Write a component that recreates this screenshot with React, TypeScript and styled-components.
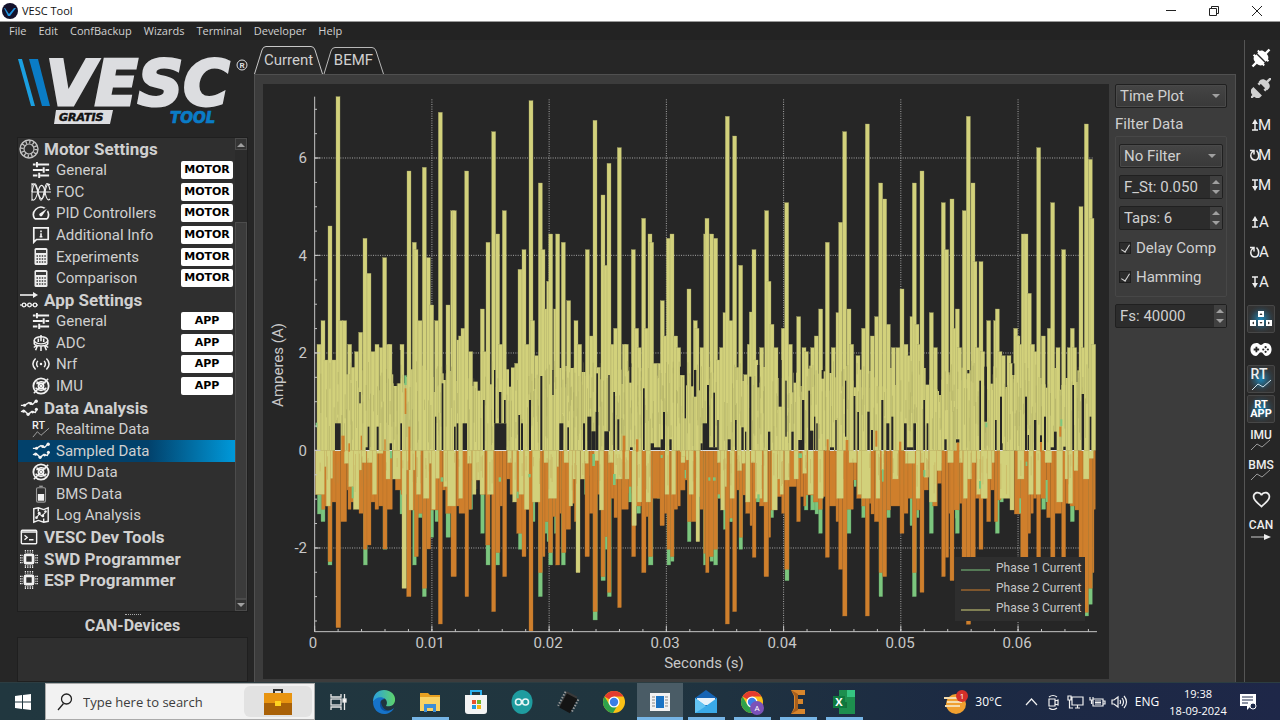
import React from "react";
import styled, { createGlobalStyle, css } from "styled-components";
import { MdSpeed, MdFavoriteBorder } from "react-icons/md";

const GlobalStyle = createGlobalStyle`
  * { box-sizing: border-box; }
  body { margin: 0; background: #262626; color: #d0d0d0; font-family: Roboto, "Liberation Sans", sans-serif; font-size: 16px; }
  button, input, select { font: inherit; color: inherit; margin: 0; }
  button { padding: 0; border: 0; background: none; }
`;

const ui = `"Open Sans", "Noto Sans", sans-serif`;

const Page = styled.div`
  min-height: 100vh;
  display: flex;
  flex-direction: column;
`;

/* ---------- window frame ---------- */

const TitleBar = styled.header`
  height: 22px;
  background: #fff;
  color: #111;
  display: flex;
  align-items: center;
  padding: 0 2px 0 2px;
  border-bottom: 1px solid #9a9a9a;
  font-family: ${ui};
  font-size: 11px;
`;
const TitleText = styled.span`
  flex: 1;
  padding-left: 4px;
`;
const WindowButton = styled.button`
  width: 43px;
  height: 20px;
  display: grid;
  place-items: center;
`;
const MenuBar = styled.nav`
  height: 18px;
  display: flex;
  align-items: center;
  gap: 12px;
  padding-left: 9px;
  background: #232323;
  font-family: ${ui};
  font-size: 11px;
`;
const MenuItem = styled.button`
  line-height: 16px;
`;
const Body = styled.div`
  flex: 1;
  display: flex;
  min-height: 0;
`;

/* ---------- side bar ---------- */

const SideBar = styled.aside`
  width: 254px;
  flex: none;
  padding-left: 17px;
  padding-right: 6px;
  display: flex;
  flex-direction: column;
`;
const LogoBox = styled.div`
  height: 97px;
  padding-top: 4px;
`;
const TreeFrame = styled.div`
  height: 475px;
  display: flex;
  background: #2f2f2f;
  border: 1px solid #1f1f1f;
`;
const Tree = styled.ul`
  flex: 1;
  height: 453px;
  margin: 0;
  padding: 0;
  list-style: none;
  display: grid;
  grid-auto-rows: 1fr;
`;
const TreeRow = styled.li<{ $head?: boolean; $on?: boolean }>`
  display: flex;
  align-items: center;
  padding: 0 2px 0 ${(p) => (p.$head ? 1 : 13)}px;
  gap: 5px;
  font-size: ${(p) => (p.$head ? 17 : 15)}px;
  font-weight: ${(p) => (p.$head ? 700 : 400)};
  line-height: 20px;
  white-space: nowrap;
  ${(p) =>
    p.$on &&
    css`
      background: linear-gradient(90deg, #02416b 0%, #02416b 60%, #0099da 100%);
    `}
`;
const TreeIcon = styled.span`
  width: 20px;
  height: 20px;
  display: grid;
  place-items: center;
  color: #f2f2f2;
`;
const TreeLabel = styled.span`
  flex: 1;
`;
const Badge = styled.span`
  width: 52px;
  height: 18px;
  border-radius: 2px;
  background: #fff;
  color: #000;
  font: 700 11px/18px "DejaVu Sans", sans-serif;
  text-align: center;
`;
const ScrollTrack = styled.div`
  width: 12px;
  display: flex;
  flex-direction: column;
  background: #2b2b2b;
`;
const ScrollStep = styled.button`
  height: 12px;
  display: grid;
  place-items: center;
  background: #343434;
  border: 1px solid #4a4a4a;
`;
const ScrollGap = styled.div`
  height: 72px;
`;
const ScrollThumb = styled.div`
  flex: 1;
  background: #3b3b3b;
  border: 1px solid #4c4c4c;
`;
const Splitter = styled.div`
  width: 16px;
  height: 1px;
  margin: 2px auto 0;
  border-top: 1px dotted #aaa;
`;
const DevicesTitle = styled.h2`
  margin: 0;
  font-size: 16px;
  line-height: 22px;
  text-align: center;
`;
const DevicesBox = styled.div`
  flex: 1;
  background: #2f2f2f;
  border: 1px solid #1f1f1f;
`;

/* ---------- main area ---------- */

const Main = styled.main`
  flex: 1;
  min-width: 0;
  display: flex;
  flex-direction: column;
`;
const Tabs = styled.div`
  height: 34px;
  display: flex;
  align-items: flex-end;
`;
const Tab = styled.button<{ $width: number }>`
  position: relative;
  width: ${(p) => p.$width}px;
  height: 28px;
  line-height: 29px;
  text-align: center;
  font-size: 15px;
`;
const TabShape = styled.svg`
  position: absolute;
  left: 0;
  top: 0;
  z-index: -1;
`;
const TabPanel = styled.section`
  flex: 1;
  display: flex;
  gap: 6px;
  padding: 9px 8px 3px 8px;
  background: #3c3c3c;
  border: 1px solid #505050;
  border-bottom: 0;
`;
const ChartBox = styled.div`
  flex: 1;
  min-width: 0;
  background: #262626;
  display: flex;
`;
const Controls = styled.form`
  width: 112px;
  flex: none;
  display: flex;
  flex-direction: column;
`;
const GroupLabel = styled.div`
  font-size: 15px;
  line-height: 24px;
  padding-top: 4px;
`;
const Group = styled.fieldset`
  margin: 0 0 7px;
  padding: 7px 3px 8px;
  min-width: 0;
  border: 1px solid #474747;
  border-radius: 2px;
  display: flex;
  flex-direction: column;
  gap: 7px;
`;
const SelectWrap = styled.div`
  display: grid;
  align-items: center;
  justify-items: end;
  & > * { grid-area: 1 / 1; }
  & > svg { margin-right: 7px; pointer-events: none; }
`;
const Select = styled.select`
  appearance: none;
  width: 100%;
  height: 24px;
  padding: 0 4px;
  font-size: 15px;
  background: linear-gradient(#454545, #393939);
  border: 1px solid #202020;
  border-radius: 2px;
  box-shadow: inset 0 0 0 1px #4a4a4a;
`;
const SpinWrap = styled.div`
  height: 24px;
  display: flex;
  border: 1px solid #202020;
  border-radius: 2px;
  background: #2c2c2c;
`;
const SpinInput = styled.input`
  flex: 1;
  min-width: 0;
  border: 0;
  padding: 0 4px;
  background: none;
  font-size: 15px;
`;
const SpinSteps = styled.div`
  width: 12px;
  background: #404040;
  display: grid;
  grid-template-rows: 1fr 1fr;
`;
const StepButton = styled.button`
  display: grid;
  place-items: center;
`;
const CheckLabel = styled.label`
  display: flex;
  align-items: center;
  gap: 5px;
  height: 22px;
  font-size: 15px;
  white-space: nowrap;
`;
const CheckBox = styled.input`
  appearance: none;
  flex: none;
  width: 12px;
  height: 12px;
  background: #2c2c2c;
  border: 1px solid #1e1e1e;
  display: flex;
  justify-content: center;
  &:checked::before {
    content: "";
    width: 4px;
    height: 8px;
    border: solid #d8d8d8;
    border-width: 0 1px 1px 0;
    transform: rotate(32deg);
  }
`;

/* ---------- right tool strip ---------- */

const Strip = styled.nav`
  width: 36px;
  flex: none;
  margin-left: 8px;
  padding: 3px 3px 0 0;
  border-left: 1px solid #555;
  display: flex;
  flex-direction: column;
  align-items: center;
`;
const StripButton = styled.button<{ $on?: boolean }>`
  width: 28px;
  height: 28px;
  margin: 1px 0;
  display: grid;
  place-items: center;
  color: #eee;
  border-radius: 2px;
  ${(p) =>
    p.$on &&
    css`
      background: radial-gradient(circle, #1c86b8 0%, #2b5468 35%, #303a40 58%, #333 75%);
      border: 1px solid #474747;
    `}
`;
const StripRule = styled.div`
  height: 7px;
`;

/* ---------- task bar ---------- */

const TaskBar = styled.footer`
  height: 38px;
  border-top: 1px solid #2c3d42;
  display: flex;
  background: linear-gradient(90deg, #21373f 0%, #20353f 50%, #1c2a43 75%, #1e2748 100%);
  color: #fff;
  font-family: ${ui};
`;
const TaskButton = styled.button<{ $open?: boolean; $active?: boolean }>`
  width: 46px;
  height: 37px;
  display: grid;
  place-items: center;
  background: ${(p) => (p.$active ? "#4a5c66" : "none")};
  ${(p) =>
    p.$open &&
    css`
      background-image: linear-gradient(#76b5e6, #76b5e6);
      background-size: ${p.$active ? 46 : 37}px 3px;
      background-position: center bottom;
      background-repeat: no-repeat;
    `}
`;
const SearchBox = styled.label`
  width: 270px;
  margin-left: -1px;
  display: flex;
  align-items: center;
  gap: 10px;
  padding: 0 2px 0 11px;
  background: #f2f2f2;
  color: #222;
  border: 1px solid #aaa;
`;
const SearchInput = styled.input`
  flex: 1;
  min-width: 0;
  padding: 0;
  border: 0;
  background: none;
  font-size: 13px;
  &::placeholder { color: #3c3c3c; }
`;
const SearchArt = styled.span`
  width: 68px;
  height: 31px;
  border-radius: 6px;
  background: #e2e2e2;
  display: grid;
  place-items: center;
`;
const Tray = styled.div`
  margin-left: auto;
  display: flex;
  align-items: center;
  font-size: 12px;
  padding-right: 16px;
`;
const TrayButton = styled.button<{ $width: number }>`
  width: ${(p) => p.$width}px;
  height: 37px;
  display: flex;
  align-items: center;
  justify-content: center;
  gap: 7px;
`;
const Clock = styled.time`
  width: 68px;
  font-size: 11px;
  line-height: 17px;
  text-align: center;
  white-space: nowrap;
`;

/* ---------- icons ---------- */

const Icon = ({ size = 18, box = 20, children }: { size?: number; box?: number; children: React.ReactNode }) => (
  <svg width={size} height={size} viewBox={`0 0 ${box} ${box}`} fill="none" stroke="currentColor" strokeWidth={1.6} aria-hidden="true">
    {children}
  </svg>
);

const Arrow = ({ up, color = "#a0a0a0" }: { up?: boolean; color?: string }) => (
  <svg width="8" height="5" viewBox="0 0 8 5" aria-hidden="true">
    <path d={up ? "M0 5L4 1L8 5Z" : "M0 0L4 4L8 0Z"} fill={color} />
  </svg>
);

const MotorIcon = () => (
  <Icon size={20}>
    <g stroke="#c4c4c4">
      <circle cx="10" cy="10" r="9" strokeWidth="1.4" />
      <circle cx="10" cy="10" r="5" strokeWidth="1.2" />
      <circle cx="10" cy="10" r="7" strokeWidth="3" strokeDasharray="1.3 2.365" />
    </g>
  </Icon>
);
const TuneIcon = () => (
  <Icon>
    <path d="M1 4H4M6 4H19M1 10H12M15 10H19M1 16H6M9 16H19" strokeWidth="2.200" />
    <path d="M5.500 1V7M13 7V13M8 13V19" strokeWidth="2.200" />
  </Icon>
);
const WavesIcon = () => (
  <Icon size={20}>
    <path d="M1 1V19M1 10H20" strokeWidth="1" />
    <g strokeWidth="1.1">
      <path d="M1 10C3 -1 5 -1 7 10S11 21 13 10S17 -1 19 8" />
      <path d="M1 3C4 -1 6 7 7.500 12S12 20 14 10S18 2 19 3" />
      <path d="M1 17C4 21 6 13 7.500 8S12 0 14 10S18 18 19 17" />
    </g>
  </Icon>
);
const InfoIcon = () => (
  <Icon>
    <path d="M2 18V2H18V15H5Z" strokeWidth="1.900" />
    <path d="M10 5V7M10 8V12M8.500 12H11.500" strokeWidth="1.800" />
  </Icon>
);
const CalcIcon = () => (
  <svg width="14" height="17" viewBox="0 0 14 17" aria-hidden="true">
    <rect x=".5" y="0" width="13" height="17" rx="1.500" fill="#eee" />
    <path d="M2 2H12V5H2Z" fill="#3a3a3a" />
    <path d="M2.500 8H12M2.500 11H12M2.500 14H12" stroke="#3a3a3a" strokeWidth="1.500" strokeDasharray="1.500 1.100" />
  </svg>
);
const AppIcon = () => (
  <Icon size={20}>
    <path d="M1 5H15" />
    <path d="M14 2L19 5L14 8Z" fill="currentColor" stroke="none" />
    <path d="M1 15H19" strokeWidth="1.200" />
    <g fill="#2f2f2f" strokeWidth="1.300">
      <circle cx="5" cy="15" r="1.800" />
      <circle cx="10.500" cy="15" r="1.800" />
      <circle cx="16" cy="15" r="1.800" />
    </g>
  </Icon>
);
const AdcIcon = () => (
  <Icon>
    <ellipse cx="10" cy="7" rx="7.500" ry="4" />
    <path d="M2.500 7V11C4 14 16 14 17.500 11V7M10 1V8M6 13L4 18M10 13V19M14 13L16 18M2 15L6 12M18 15L14 12M7 5V9M13 5V9" strokeWidth="1.700" />
  </Icon>
);
const RadioIcon = () => (
  <Icon>
    <path d="M4 4C0 8 0 12 4 16M16 4C20 8 20 12 16 16M6.500 6.500C4.500 9 4.500 11 6.500 13.500M13.500 6.500C15.500 9 15.500 11 13.500 13.500" />
    <circle cx="10" cy="10" r="1.400" fill="currentColor" stroke="none" />
  </Icon>
);
const ImuIcon = () => (
  <Icon>
    <circle cx="10" cy="10" r="8.500" strokeWidth="2" />
    <circle cx="10" cy="10" r="3" />
    <path d="M2 18L18 2M5 5L15 15M4 12C7 16 13 16 16 12M5 8C7 5 12 4 15 7" />
  </Icon>
);
const DataIcon = () => (
  <Icon>
    <path d="M1 7H5L10 4L14 6L18 2M1 14L5 13L9 17L13 14L17 15L19 11" strokeWidth="1.500" />
    <g fill="currentColor" stroke="none">
      <circle cx="5" cy="7" r="1.700" /><circle cx="12" cy="5" r="1.700" /><circle cx="18" cy="2.500" r="1.900" />
      <circle cx="4" cy="13.500" r="1.700" /><circle cx="9" cy="17" r="1.800" /><circle cx="14" cy="14.500" r="1.500" /><circle cx="18.200" cy="11.500" r="1.700" />
    </g>
  </Icon>
);
const RtIcon = () => (
  <Icon>
    <text x="0" y="10" fontSize="12" fontWeight="500" fontFamily="Roboto, sans-serif" fill="currentColor" stroke="none">RT</text>
    <path d="M1 19L6 13L10 17L19 9" strokeWidth="1" stroke="#aaa" />
  </Icon>
);
const BatteryIcon = () => (
  <Icon>
    <rect x="5" y="3" width="10" height="16" rx="1.500" stroke="#999" strokeWidth="1.200" />
    <path d="M8 1.500H12" stroke="#999" />
    <rect x="6.500" y="10" width="7" height="7.500" fill="currentColor" stroke="none" />
  </Icon>
);
const MapIcon = () => (
  <Icon>
    <path d="M2 3L7 2L13 4L18 2V17L13 18L7 16L2 18ZM7 2V6M13 14V18" />
    <path d="M5 13L8 9L11 11L15 7" strokeWidth="1.200" />
    <g fill="currentColor" stroke="none"><circle cx="8" cy="8" r="1.600" /><circle cx="12" cy="11" r="1.600" /><circle cx="15" cy="6" r="1.400" /><circle cx="5" cy="13" r="1.500" /></g>
  </Icon>
);
const TerminalIcon = () => (
  <Icon>
    <rect x="1.500" y="2.500" width="17" height="15" rx="1" />
    <path d="M1 4.500H19M5 8L8 10.500L5 13M10 13H15" />
  </Icon>
);
const ChipIcon = () => (
  <Icon>
    <rect x="5.500" y="5.500" width="9" height="9" rx="1" strokeWidth="3" />
    <path d="M6 0V3M8.700 0V3M11.400 0V3M14 0V3M6 17V20M8.700 17V20M11.400 17V20M14 17V20M0 6H3M0 8.700H3M0 11.400H3M0 14H3M17 6H20M17 8.700H20M17 11.400H20M17 14H20" strokeWidth="1.300" strokeDasharray="1.200 .5" />
  </Icon>
);

const PlugIcon = ({ apart }: { apart?: boolean }) => (
  <Icon size={20}>
    <g transform="rotate(45 10 10)" fill={apart ? "#d0d0d0" : "#fff"} stroke="none">
      <g transform={apart ? "translate(0 -2)" : undefined}>
        <path d="M4 9.300V6.500C4.500 4.500 6 3.200 8.800 3V-2H11.200V3C14 3.200 15.500 4.500 16 6.500V9.300Z" />
        {apart && <path d="M4.500 8H7V11.500H4.500ZM13 8H15.500V11.500H13Z" />}
      </g>
      <g transform={apart ? "translate(0 4)" : undefined}>
        <path d="M4 10.700V13.500C4.500 15.500 6 16.800 8.800 17V22H11.200V17C14 16.800 15.500 15.500 16 13.500V10.700Z" />
      </g>
      {!apart && <path d="M2.500 6H5V8H2.500ZM15 6H17.500V8H15ZM2.500 12H5V14H2.500ZM15 12H17.500V14H15Z" />}
    </g>
  </Icon>
);

type ConfKind = "up" | "turn" | "down";
const ConfIcon = ({ kind, letter }: { kind: ConfKind; letter: string }) => (
  <svg width="22" height="20" viewBox="0 0 22 20" aria-hidden="true">
    <g fill="none" stroke="currentColor" strokeWidth="1.500">
      {kind === "up" && <path d="M5 15V7M2 15H8" />}
      {kind === "down" && <path d="M5 5V12M2 5H8" />}
      {kind === "turn" && <path d="M3 6C-1 10 1 15 5 15S10 9 6.500 5.500M0 5.500H4V9.500" />}
    </g>
    {kind === "up" && <path d="M2 9L5 4L8 9Z" fill="currentColor" />}
    {kind === "down" && <path d="M2 11L5 16L8 11Z" fill="currentColor" />}
    <text x={letter === "M" ? 8 : 9} y="15" fontSize="15" fill="currentColor" fontFamily="Roboto, sans-serif">{letter}</text>
  </svg>
);

const LabelIcon = ({ text, tail = "line", color = "#eee" }: { text: string; tail?: "line" | "arrow" | "bright"; color?: string }) => (
  <svg width="28" height="24" viewBox="0 0 28 24" aria-hidden="true">
    <text x={text === "RT" ? 11 : 14} y="12" fontSize={text === "RT" ? 14 : 12} fontWeight="500" textAnchor="middle" fill={color} fontFamily="Roboto, sans-serif">{text}</text>
    {tail === "arrow" ? (
      <g><path d="M4 20H19" stroke="#ccc" /><path d="M17 17L24 20L17 23Z" fill="#eee" /></g>
    ) : (
      <path d="M4 23L10 17L15 20L23 13" fill="none" stroke={tail === "bright" ? "#cfe6f2" : "#999"} />
    )}
  </svg>
);
const KeysIcon = () => (
  <svg width="22" height="18" viewBox="0 0 22 18" aria-hidden="true">
    <g fill="#fff"><rect x="8" y="1" width="6" height="6" /><rect x="0" y="10" width="6" height="6" /><rect x="8" y="10" width="6" height="6" /><rect x="16" y="10" width="6" height="6" /></g>
    <g fill="#333"><path d="M9.500 5L11 3L12.500 5ZM9.500 12L11 14L12.500 12ZM4 11.500V14.500L2 13ZM18 11.500V14.500L20 13Z" /></g>
  </svg>
);
const PadIcon = () => (
  <svg width="22" height="15" viewBox="0 0 24 16" aria-hidden="true">
    <path d="M7 1C10 1 10 3 12 3S14 1 17 1C21 1 23.500 4 23.500 8S21 15 17.500 15C15 15 14.500 11 12 11S9 15 6.500 15C3 15 .5 12 .5 8S3 1 7 1Z" fill="#fff" />
    <path d="M4 8H10M7 5V11" stroke="#262626" strokeWidth="2" />
    <g fill="#262626"><circle cx="17" cy="5.500" r="1.200" /><circle cx="17" cy="10.500" r="1.200" /><circle cx="14.500" cy="8" r="1.200" /><circle cx="19.500" cy="8" r="1.200" /></g>
  </svg>
);
const RtAppIcon = () => (
  <svg width="26" height="24" viewBox="0 0 26 24" aria-hidden="true" fontWeight="700" fill="#fff" textAnchor="middle" fontFamily="Roboto, sans-serif">
    <text x="13" y="11" fontSize="11">RT</text>
    <text x="13" y="20" fontSize="11">APP</text>
  </svg>
);

const Logo = () => (
  <svg width="232" height="88" viewBox="0 -8 232 88" role="img" aria-label="VESC Tool">
    <path d="M1 7H5L18 54H14Z" fill="#1b9fe0" />
    <path d="M12 7H21L33 54H25Z" fill="#0a7cc6" />
    <g fontFamily="DejaVu Sans, sans-serif" fontWeight="700" fontStyle="italic">
      <text x="29" y="53" fontSize="63" fill="#dcdde0" stroke="#dcdde0" strokeWidth="3">VESC</text>
      <path d="M39 58H96L93 72H37Z" fill="#dcdde0" />
      <text x="42" y="69" fontSize="11" fill="#111" stroke="#111" strokeWidth="0.500">GRATIS</text>
      <text x="153" y="71" fontSize="15" fill="#0a7cc6" stroke="#0a7cc6" strokeWidth="0.700">TOOL</text>
    </g>
    <circle cx="225" cy="13" r="5" fill="none" stroke="#dcdde0" />
    <text x="225" y="16" fontSize="8" fontWeight="700" textAnchor="middle" fill="#dcdde0" fontFamily="Roboto, sans-serif">R</text>
  </svg>
);

/* ---------- chart ---------- */

// Samples are kept in thirds of a pixel, in two halves with their own origin.
const HALVES = [-24, 1251];
const LOW = 858;
const ZERO = 1099;

type Pair = [number, number];
type Span = [number, number, number];
type Block = [number, number, number, number];

const pairs = (s: string) => s.trim().split(/\s+/).map((t) => t.split(",").map(Number) as Pair);
const spans = (s: string) => s.trim().split(/\s+/).map((t) => t.split(",").map(Number) as Span);
const blocks = (s: string) => s.trim().split(/\s+/).map((t) => t.split(",").map(Number) as Block);

const peaks = [
  pairs(`192,793 204,722 213,840 225,438 237,840 249,50 258,722 269,722 284,793 294,862 305,815 317,757 330,475 342,580 354,815 366,793 379,803 389,533 400,793 405,793 441,793 462,273 478,487 483,509 495,722 508,262 520,533 530,675 545,722 556,97 579,675 593,392 598,392 611,780 617,768 624,745 635,273 647,815 682,687 690,815 699,487 716,155 728,462 737,793 748,392 774,863 785,850 795,568 807,509 816,793 828,62 833,722 845,827 856,309 864,509 874,687 881,604 887,462 902,687 908,462 925,487 941,662 963,722 974,793 997,509 1009,768 1020,121 1030,862 1044,345 1053,556 1062,250 1074,793 1082,745 1093,203 1108,793 1114,793 1135,509 1145,745 1153,803 1166,415 1174,745 1185,462 1190,487 1200,850 1213,850 1222,662 1232,768 1240,475 1251,462 1262,768 1271,803 1283,886`),
  pairs(`8,886 27,627 46,722 51,745 66,803 77,462 81,415 95,462 107,475 116,840 125,803 135,698 142,109 153,722 164,168 172,862 182,556 197,884 208,793 214,696 222,509 228,840 245,803 260,392 267,604 276,733 288,803 310,745 320,368 331,793 356,710 372,803 379,815 398,803 409,768 422,687 442,487 460,803 474,698 482,427 494,155 507,687 515,793 534,827 551,745 562,132 577,768 590,710 602,309 614,357 625,733 640,803 654,803 666,627 678,793 687,827 696,710 703,309 711,733 719,793 726,273 754,698 766,803 790,368 800,509 816,357 825,745 832,687 839,803 853,392 865,109 879,309 885,545 893,803 903,545 908,815 926,722 947,722 952,687 960,815 970,827 987,827 994,850 1007,745 1014,768 1024,793 1030,462 1038,462 1048,640 1058,793 1068,815 1076,203 1090,768 1108,745 1118,368 1134,803 1151,509 1168,803 1177,745 1184,803 1203,380 1211,803 1219,132 1231,238 1236,415 1241,793`),
];

const yellowLow = [
  spans(`182,208,373 208,214,290 214,226,408 226,233,325 268,281,280 281,295,350 295,312,418 312,320,300 320,333,278 336,352,278 352,365,373 365,384,250 393,405,327 413,436,327 441,454,655 454,462,300 462,474,420 474,480,300 484,497,373 505,522,385 522,530,280 530,541,418 541,553,325 566,578,350 578,602,408 611,623,385 637,650,280 652,663,373 663,675,330 675,688,373 697,715,373 758,770,278 773,785,396 792,806,373 808,822,418 832,855,396 867,880,278 880,905,385 905,911,290 927,941,278 942,953,408 953,962,327 963,975,608 977,989,327 989,1000,280 1018,1031,272 1033,1046,420 1060,1075,278 1077,1102,327 1110,1122,327 1131,1144,467 1147,1160,396 1173,1187,396 1230,1242,373 1250,1262,373 1278,1290,278`),
  spans(`0,4,245 4,16,260 18,26,270 27,40,373 48,59,515 112,122,278 122,134,420 134,140,350 150,163,385 172,185,302 185,196,280 197,210,396 213,225,278 226,246,385 251,262,396 276,292,420 292,300,327 300,310,373 314,328,330 342,355,327 368,380,310 384,400,373 414,430,385 470,490,385 507,530,278 533,545,373 545,572,385 588,600,385 605,612,300 638,655,327 676,684,280 684,705,280 708,720,385 722,733,278 733,746,322 748,770,396 770,785,302 803,820,278 838,848,278 850,862,385 862,875,327 875,888,278 890,902,373 903,922,385 922,935,327 935,943,278 960,990,385 990,1002,420 1013,1032,327 1046,1060,373 1068,1082,373 1095,1115,278 1130,1148,396 1155,1163,327 1165,1178,400 1182,1194,302 1210,1227,327 1227,1240,265`),
];

const orangeLow = [
  spans(`182,200,373 200,210,418 210,219,408 219,231,575 231,243,396 243,257,773 257,275,455 275,279,360 279,288,418 288,312,396 312,325,430 325,336,538 336,348,525 348,360,396 360,371,418 371,384,408 384,396,537 396,412,418 414,421,327 421,438,360 438,455,373 455,468,680 468,478,420 478,490,560 490,502,430 502,515,655 515,527,537 527,550,420 550,562,762 562,572,360 572,588,430 588,604,620 604,612,408 612,630,430 630,641,680 641,650,418 650,680,330 680,692,373 692,705,525 705,710,373 710,722,725 722,735,548 735,743,408 743,755,620 755,765,327 765,785,373 785,801,490 801,813,560 813,822,418 822,834,783 834,850,396 850,862,608 862,870,560 870,880,455 880,893,548 893,902,440 902,914,585 914,920,430 920,933,548 933,947,478 947,958,400 958,966,455 977,990,327 990,1003,560 1003,1014,430 1014,1027,725 1027,1038,373 1038,1050,620 1050,1057,500 1057,1068,667 1068,1077,385 1077,1088,443 1088,1099,713 1099,1120,418 1120,1130,370 1130,1142,560 1142,1160,408 1160,1173,608 1173,1180,440 1180,1193,560 1193,1215,385 1215,1228,467 1228,1236,430 1236,1246,538 1246,1257,560 1257,1268,418 1268,1276,408 1276,1290,360`),
  spans(`0,15,360 15,22,330 22,34,455 34,48,455 48,60,380 60,71,418 71,77,550 77,87,608 87,100,560 100,113,538 113,125,385 125,136,418 136,148,762 148,158,445 158,170,725 170,178,360 178,188,502 188,197,375 197,210,430 210,217,467 217,228,562 228,238,380 238,252,408 252,266,620 266,272,502 272,280,420 280,305,380 305,314,430 314,327,598 327,350,350 350,361,455 361,371,380 371,378,408 378,400,375 400,415,396 415,427,418 427,436,380 436,448,562 448,468,408 468,476,455 476,488,598 488,501,738 501,520,418 520,530,330 530,545,385 545,556,408 556,568,738 568,573,400 573,583,432 583,597,455 597,608,608 608,620,620 620,632,420 632,660,408 660,672,490 672,684,430 684,697,385 697,709,608 709,720,420 720,732,667 732,745,360 745,758,320 758,772,408 772,785,340 785,796,620 796,806,562 806,810,430 810,822,632 822,838,420 838,846,400 846,859,562 859,872,763 872,886,562 886,897,385 897,909,538 909,920,385 920,932,455 932,943,360 943,953,455 953,963,390 1003,1022,432 1022,1044,562 1044,1052,490 1052,1060,430 1060,1070,385 1070,1082,562 1082,1100,385 1100,1112,443 1112,1125,562 1125,1145,430 1145,1157,562 1157,1170,400 1170,1185,408 1185,1197,420 1197,1209,562 1209,1225,727 1225,1237,655 1237,1242,608 1242,1246,418`),
];

const greenLow = [
  spans(`187,200,432 198,210,455 219,231,585 291,298,360 325,337,585 384,396,538 435,444,432 473,484,585 489,501,443 502,514,680 525,536,502 540,551,455 573,586,502 643,653,418 677,688,490 693,705,585 722,734,585 790,802,538 833,840,455 850,862,680 870,878,490 876,886,515 881,893,585 898,904,490 919,931,585 988,994,373 1014,1027,750 1038,1051,632 1050,1058,538 1057,1069,680 1120,1131,396 1145,1157,430 1180,1194,585 1207,1217,385 1236,1247,585 1246,1257,574`),
  spans(`22,33,515 70,77,585 90,101,574 101,113,585 130,139,478 148,158,455 177,188,538 228,238,396 272,281,443 315,327,632 373,384,420 392,405,420 405,416,432 416,427,490 501,513,490 545,556,443 597,608,680 620,631,443 690,697,467 697,709,680 709,717,443 748,760,490 826,838,490 946,958,490 960,970,396 1015,1024,430 1023,1035,572 1085,1097,418 1171,1183,455 1215,1226,738 1225,1237,703`),
];

const greenTicks = [
  blocks(`182,187,158,172 448,455,16,45 557,565,322,335 731,738,322,335 785,791,365,385 820,827,312,322 1012,1020,252,288 1074,1082,312,345 1122,1129,350,396 1217,1223,255,264 405,411,240,265 290,296,350,385`),
  blocks(`85,91,322,332 99,107,322,332 113,120,373,385 151,157,445,455 232,239,373,396 355,366,250,264 522,529,330,350 606,611,298,335 730,736,300,320 897,903,333,356 826,833,420,445 1018,1023,385,430 1097,1103,330,396 1037,1042,275,288 1141,1147,148,168 916,922,158,172 14,18,300,325`),
];

const orangeTicks = [
  blocks(`259,269,197,245 280,285,220,245 317,321,197,240 449,454,55,132 1103,1111,197,245 1143,1150,208,245 388,392,208,240 460,466,170,300`),
  blocks(`440,446,208,245 497,505,210,245 657,664,215,245 830,838,218,245 1080,1086,216,245 1138,1144,170,200 586,592,182,230`),
];

const gaps = [
  blocks(`240,257,160,241 332,341,232,241 338,343,170,241 365,371,170,241 404,411,220,241 415,436,-60,40 436,441,160,241 540,544,140,241 560,565,40,241 566,572,0,30 597,602,170,241 605,610,160,241 623,636,160,241 684,689,90,241 718,754,160,241 717,721,0,160 732,739,66,160 747,752,90,160 762,768,-40,50 790,795,135,241 798,804,160,241 822,828,90,241 856,862,18,241 892,896,0,75 913,925,160,241 937,942,172,241 984,990,160,241 997,1009,140,241 1009,1022,184,241 1022,1030,126,241 1024,1029,10,126 1048,1062,184,241 1060,1064,15,184 1075,1080,66,241 1087,1093,148,241 1123,1129,-20,38 1125,1133,232,241 1164,1169,55,241 1187,1197,220,241 1194,1217,232,241 1217,1224,208,241 1224,1230,126,241 1243,1250,208,241 1275,1281,0,15 654,664,-30,25 313,317,66,100`),
  blocks(`0,14,-10,14 14,18,14,145 42,49,0,80 62,68,220,241 68,81,160,241 81,87,45,241 87,112,232,241 100,105,68,232 112,116,150,241 143,152,208,241 165,170,150,241 184,191,172,241 195,199,185,241 208,214,20,241 232,238,-15,52 264,271,185,241 296,305,-30,110 316,320,32,200 334,341,185,241 341,348,-20,38 355,366,210,241 366,373,90,241 385,390,62,241 390,400,182,241 402,406,140,241 409,413,160,241 425,431,0,26 450,462,232,241 466,470,150,241 495,499,32,200 521,526,78,241 532,537,126,241 562,569,125,241 573,579,180,241 604,610,90,241 619,628,160,241 634,640,140,241 672,680,160,241 680,700,232,241 700,708,160,241 730,735,90,241 740,745,160,241 777,783,-30,75 793,800,208,241 828,838,208,218 862,868,0,10 898,903,32,241 913,921,-10,155 945,950,150,241 960,966,80,241 963,968,220,241 997,1003,-20,15 1035,1041,80,241 1043,1047,195,241 1062,1069,150,241 1080,1086,196,218 1092,1098,140,241 1112,1124,232,241 1122,1130,185,241 1150,1157,230,241 1177,1182,45,241 1205,1212,72,241 1229,1234,140,241`),
];

const eachHalf = (render: (half: number) => React.ReactNode) =>
  HALVES.map((dx, half) => <g key={half} transform={`translate(${dx} 0)`}>{render(half)}</g>);

const Drops = ({ data, fill, edge }: { data: Span[][]; fill: string; edge: string }) => (
  <g fill={fill} stroke={edge} strokeWidth="1">
    {eachHalf((h) => data[h].map(([a, b, y], i) => <rect key={i} x={a} y={ZERO} width={b - a} height={LOW + y - ZERO} />))}
  </g>
);
const Patches = ({ data, fill }: { data: Block[][]; fill: string }) => (
  <g fill={fill}>
    {eachHalf((h) => data[h].map(([a, b, t, u], i) => <rect key={i} x={a} y={LOW + t} width={b - a} height={u - t} />))}
  </g>
);

// Repeatable noise in 0..1, for the dense traffic near the zero line.
const noise = (n: number) => {
  const v = Math.sin(n * 12.9898) * 43758.5453;
  return v - Math.floor(v);
};
const dense = Array.from({ length: 194 }, (_, i) => ({ x: 163 + i * 12, y: Math.round(845 + noise(i + 1) * 80) }));
const grain = Array.from({ length: 420 }, (_, i) => ({
  x: Math.round(170 + noise(i + 500) * 2310),
  y: Math.round(830 + noise(i + 1500) * 200),
  h: Math.round(30 + noise(i + 2500) * 160),
}));
const lowGrain = Array.from({ length: 200 }, (_, i) => ({
  x: Math.round(170 + noise(i + 3500) * 2310),
  y: Math.round(1105 + noise(i + 4500) * 40),
  h: Math.round(20 + noise(i + 5500) * 70),
}));

const majorX = [0, 1, 2, 3, 4, 5, 6];
const Chart = () => (
  <svg width="100%" viewBox="0 0 846 595" role="img" aria-label="Sampled phase currents" fontFamily="Roboto, sans-serif" fill="#c8c8c8">
    <g transform="scale(.33333)">
      <g stroke="#a8a8a8" strokeWidth="3" strokeDasharray="3 4">
        {majorX.slice(1).map((n) => <path key={n} d={`M${155 + n * 351.7} 46V1640`} />)}
        {[222, 514, 807, 1392].map((y) => <path key={y} d={`M155 ${y}H2490`} />)}
      </g>
      <Drops data={greenLow} fill="#7cc67e" edge="#5d9a62" />
      <Drops data={orangeLow} fill="#cf7f2c" edge="#ad702f" />
      <g fill="#d2d17b">
        {dense.map((d) => <rect key={d.x} x={d.x} y={d.y} width="13" height={ZERO - d.y} />)}
      </g>
      <g fill="#d2d17b" stroke="#a3a266" strokeWidth="1">
        {eachHalf((h) => peaks[h].map(([x, y], i) => <rect key={i} x={x - 6} y={y - 12} width="12" height={ZERO - y + 12} />))}
      </g>
      <g fill="#8f8e50" opacity=".28">
        {grain.map((g, i) => <rect key={i} x={g.x} y={g.y} width="3" height={Math.min(g.h, ZERO - g.y)} />)}
      </g>
      <Patches data={gaps} fill="#262626" />
      <Drops data={yellowLow} fill="#d2d17b" edge="#c0b568" />
      <g fill="#b98a3c" opacity=".25">
        {lowGrain.map((g, i) => <rect key={i} x={g.x} y={g.y} width="3" height={g.h} />)}
      </g>
      <Patches data={orangeTicks} fill="#cf7f2c" />
      <Patches data={greenTicks} fill="#7cc67e" />
      {eachHalf((h) => gaps[h].filter((g) => g[3] === 241).map(([a, b], i) => <rect key={i} x={a} y={ZERO - 1} width={b - a} height="3" fill="#ddd" />))}
      <g stroke="#c4c4c4" strokeWidth="3" fill="none">
        <path d="M155 38V1643H2502" />
        {majorX.map((n) => <path key={n} d={`M${155 + n * 351.7} 1643V1625`} />)}
        {Array.from({ length: 34 }, (_, i) => <path key={i} d={`M${155 + i * 70.34} 1643V1635`} />)}
        {[222, 514, 807, 1099, 1392].map((y) => <path key={y} d={`M155 ${y}H172`} />)}
        {Array.from({ length: 22 }, (_, i) => <path key={i} d={`M155 ${1611 - i * 73.1}H162`} />)}
      </g>
    </g>
    <g fontSize="15" textAnchor="end">
      <text x="44" y="79">6</text>
      <text x="44" y="177">4</text>
      <text x="44" y="274">2</text>
      <text x="44" y="372">0</text>
      <text x="44" y="469">-2</text>
    </g>
    <g fontSize="15" textAnchor="middle">
      <text x="50" y="564">0</text>
      {majorX.slice(1).map((n) => <text key={n} x={Math.round(50 + n * 117.3)} y="564">{`0.0${n}`}</text>)}
      <text x="441" y="584">Seconds (s)</text>
      <text transform="translate(20 281) rotate(-90)">Amperes (A)</text>
    </g>
    <rect x="692" y="473" width="130" height="64" fill="#2e2e2e" />
    <g fontSize="12">
      {[["Phase 1 Current", "#7cc67e"], ["Phase 2 Current", "#cf7f2c"], ["Phase 3 Current", "#d2d17b"]].map(([name, color], i) => (
        <g key={name}>
          <path d={`M698 ${486 + i * 20}H727`} stroke={color} />
          <text x="733" y={488 + i * 20}>{name}</text>
        </g>
      ))}
    </g>
  </svg>
);

/* ---------- page content ---------- */

const tune = <TuneIcon />;
const calc = <CalcIcon />;

const tree: { label: string; icon: React.ReactNode; head?: boolean; badge?: string; on?: boolean }[] = [
  { label: "Motor Settings", icon: <MotorIcon />, head: true },
  { label: "General", icon: tune, badge: "MOTOR" },
  { label: "FOC", icon: <WavesIcon />, badge: "MOTOR" },
  { label: "PID Controllers", icon: <MdSpeed size={20} />, badge: "MOTOR" },
  { label: "Additional Info", icon: <InfoIcon />, badge: "MOTOR" },
  { label: "Experiments", icon: calc, badge: "MOTOR" },
  { label: "Comparison", icon: calc, badge: "MOTOR" },
  { label: "App Settings", icon: <AppIcon />, head: true },
  { label: "General", icon: tune, badge: "APP" },
  { label: "ADC", icon: <AdcIcon />, badge: "APP" },
  { label: "Nrf", icon: <RadioIcon />, badge: "APP" },
  { label: "IMU", icon: <ImuIcon />, badge: "APP" },
  { label: "Data Analysis", icon: <DataIcon />, head: true },
  { label: "Realtime Data", icon: <RtIcon /> },
  { label: "Sampled Data", icon: <DataIcon />, on: true },
  { label: "IMU Data", icon: <ImuIcon /> },
  { label: "BMS Data", icon: <BatteryIcon /> },
  { label: "Log Analysis", icon: <MapIcon /> },
  { label: "VESC Dev Tools", icon: <TerminalIcon />, head: true },
  { label: "SWD Programmer", icon: <ChipIcon />, head: true },
  { label: "ESP Programmer", icon: <ChipIcon />, head: true },
];

const Spin = ({ label, value }: { label: string; value: string }) => (
  <SpinWrap>
    <SpinInput aria-label={label} defaultValue={value} />
    <SpinSteps>
      <StepButton type="button" aria-label={`Increase ${label}`}><Arrow up /></StepButton>
      <StepButton type="button" aria-label={`Decrease ${label}`}><Arrow /></StepButton>
    </SpinSteps>
  </SpinWrap>
);
const Combo = ({ label, value }: { label: string; value: string }) => (
  <SelectWrap>
    <Select aria-label={label} defaultValue={value}><option>{value}</option></Select>
    <Arrow />
  </SelectWrap>
);

const Chrome = ({ badge }: { badge?: boolean }) => (
  <svg width="24" height="26" viewBox="0 0 24 26" aria-hidden="true">
    <circle cx="12" cy="13" r="11" fill="#fbc116" />
    <path d="M12 13L2.500 7.500A11 11 0 0 1 21.500 7.500H12Z" fill="#e33b2e" />
    <path d="M2.500 7.500A11 11 0 0 0 11 24L16 15.500L12 13L7 15Z" fill="#2fa24c" />
    <circle cx="12" cy="13" r="5.500" fill="#fff" />
    <circle cx="12" cy="13" r="4.200" fill="#3a7ee8" />
    {badge && <g><circle cx="17" cy="19" r="7" fill="#7b52b8" /><text x="17" y="22" fontSize="8" textAnchor="middle" fill="#fff">A</text></g>}
  </svg>
);

const taskIcons: { name: string; open?: boolean; active?: boolean; icon: React.ReactNode }[] = [
  { name: "Task view", icon: (
    <svg width="18" height="18" viewBox="0 0 18 18" fill="none" stroke="#e8e8e8" strokeWidth="1.300"><path d="M2 1V4H12V1M2 17V14H12V17M15.500 1V17" /><rect x="2" y="6" width="10" height="6" /><rect x="14" y="6" width="3" height="3" fill="#fff" /></svg>) },
  { name: "Edge", icon: (
    <svg width="24" height="26" viewBox="0 0 24 26">
      <defs><linearGradient id="edge" x1="0" x2="1"><stop offset="0" stopColor="#2a9fe0" /><stop offset="1" stopColor="#5fd46a" /></linearGradient></defs>
      <path d="M1 13C1 5 6 1 12 1C19 1 24 6 23 12C22 17 17 18 14 17C16 14 15 9 10 9C5 9 2 12 1 13Z" fill="url(#edge)" />
      <path d="M1 13C3 8 10 7 13 10C8 10 7 15 10 19C13 23 19 22 22 19C20 23 16 25 12 25C6 25 1 20 1 13Z" fill="#1673c9" />
      <path d="M9 12C6 17 10 24 17 22C12 21 9 17 9 12Z" fill="#0d4f9a" />
    </svg>) },
  { name: "File Explorer", open: true, icon: (
    <svg width="22" height="22" viewBox="0 0 22 22"><path d="M1 2H9L11 4H21V19H1Z" fill="#e8a020" /><path d="M1 6H21V20H1Z" fill="#fad264" /><path d="M5 21V13H17V21H14V17H8V21Z" fill="#3e8dd6" /></svg>) },
  { name: "Store", icon: (
    <svg width="24" height="26" viewBox="0 0 24 26"><path d="M7 6V2H17V6" fill="none" stroke="#2bb0ee" strokeWidth="2" /><path d="M1 6H23V22Q23 25 20 25H4Q1 25 1 22Z" fill="#f3f3f3" /><path d="M8 11H12V15H8Z" fill="#e8502e" /><path d="M13 11H17V15H13Z" fill="#6db52c" /><path d="M8 16H12V20H8Z" fill="#1f9be0" /><path d="M13 16H17V20H13Z" fill="#f4b614" /></svg>) },
  { name: "Arduino", icon: (
    <svg width="22" height="26" viewBox="0 0 22 26"><ellipse cx="11" cy="13" rx="10.500" ry="12" fill="#1f9c9f" /><g fill="none" stroke="#e8f6f6" strokeWidth="1.600"><circle cx="7.500" cy="13" r="3" /><circle cx="14.500" cy="13" r="3" /></g></svg>) },
  { name: "Chip tool", icon: (
    <svg width="24" height="24" viewBox="0 0 24 24"><g transform="rotate(28 12 12)"><path d="M6 3H18V19H6Z" fill="#3a3a3a" /><path d="M7 5H19V21H7Z" fill="#141414" /><path d="M5 4V20M20 5V20" stroke="#999" strokeWidth="2" strokeDasharray="1.500 1.500" /></g></svg>) },
  { name: "Chrome", icon: <Chrome /> },
  { name: "VESC Tool", open: true, active: true, icon: (
    <svg width="20" height="18" viewBox="0 0 20 18"><path d="M0 0H20V18H0Z" fill="#f2f2f2" /><path d="M6 3H14V15H6Z" fill="#1a73c4" /><path d="M2 4H5M2 7H5M2 10H5M2 13H5M15 4H18M15 7H18M15 10H18M15 13H18" stroke="#888" /></svg>) },
  { name: "Mail", open: true, icon: (
    <svg width="24" height="26" viewBox="0 0 24 26"><path d="M1 9L12 1L23 9V24H1Z" fill="#1664b4" /><path d="M3 9H21V16H3Z" fill="#e8f2fa" /><path d="M1 9L12 17L23 9V24H1Z" fill="#3aaae8" /><path d="M1 9L12 17L6 21L1 24Z" fill="#63c4f3" /></svg>) },
  { name: "Chrome profile", open: true, icon: <Chrome badge /> },
  { name: "Eagle", open: true, icon: (
    <svg width="16" height="26" viewBox="0 0 16 26"><path d="M1 1H15V6H8V10H13V15H8V20H15V25H1L4 19V7Z" fill="#d8862c" /><path d="M1 1L5 7V19L1 25L8 21V5Z" fill="#a85f1c" /></svg>) },
  { name: "Excel", open: true, icon: (
    <svg width="24" height="26" viewBox="0 0 24 26"><path d="M7 1H23V25H7Z" fill="#1d8f4e" /><path d="M15 1H23V8H15Z" fill="#35c481" /><path d="M7 13H15V19H7Z" fill="#17703c" /><path d="M1 7H13V19H1Z" fill="#0f7a3f" /><text x="7" y="17" fontSize="11" fontWeight="700" textAnchor="middle" fill="#fff">X</text></svg>) },
];

const trayIcon = (d: string) => (
  <svg width="17" height="16" viewBox="0 0 17 16" fill="none" stroke="#f0f0f0" strokeWidth="1.200" aria-hidden="true"><path d={d} /></svg>
);

export default function App() {
  return (
    <Page>
      <GlobalStyle />
      <TitleBar>
        <svg width="16" height="16" viewBox="0 0 16 16" aria-hidden="true"><circle cx="8" cy="8" r="8" fill="#14122c" /><path d="M3 5L7 11L12 5H14L8 13H6L2 5Z" fill="#2196e0" /></svg>
        <TitleText>VESC Tool</TitleText>
        <WindowButton aria-label="Minimize"><svg width="10" height="10"><path d="M0 4.500H10" stroke="#222" /></svg></WindowButton>
        <WindowButton aria-label="Restore"><svg width="10" height="10" fill="none" stroke="#222"><path d="M.5 2.500H7.500V9.500H.5ZM2.500 2.500V.5H9.500V7.500H7.500" /></svg></WindowButton>
        <WindowButton aria-label="Close"><svg width="10" height="10"><path d="M0 0L10 10M10 0L0 10" stroke="#222" /></svg></WindowButton>
      </TitleBar>
      <MenuBar>
        {["File", "Edit", "ConfBackup", "Wizards", "Terminal", "Developer", "Help"].map((m) => <MenuItem key={m}>{m}</MenuItem>)}
      </MenuBar>
      <Body>
        <SideBar>
          <LogoBox><Logo /></LogoBox>
          <TreeFrame>
            <Tree>
              {tree.map((t, i) => (
                <TreeRow key={i} $head={t.head} $on={t.on}>
                  <TreeIcon>{t.icon}</TreeIcon>
                  <TreeLabel>{t.label}</TreeLabel>
                  {t.badge && <Badge>{t.badge}</Badge>}
                </TreeRow>
              ))}
            </Tree>
            <ScrollTrack>
              <ScrollStep aria-label="Scroll up"><Arrow up /></ScrollStep>
              <ScrollGap />
              <ScrollThumb />
              <ScrollStep aria-label="Scroll down"><Arrow /></ScrollStep>
            </ScrollTrack>
          </TreeFrame>
          <Splitter />
          <DevicesTitle>CAN-Devices</DevicesTitle>
          <DevicesBox />
        </SideBar>
        <Main>
          <Tabs role="tablist">
            <Tab role="tab" aria-selected="true" $width={69}>
              <TabShape width="69" height="28"><path d="M.5 28L8 4Q9 .5 12 .5H57Q60 .5 61 4L68.500 28" fill="#2a2a2a" stroke="#c8c8c8" /></TabShape>
              Current
            </Tab>
            <Tab role="tab" aria-selected="false" $width={61}>
              <TabShape width="61" height="28"><path d="M1 28L8 5Q9 1.500 12 1.500H49Q52 1.500 53 5L60.500 28" fill="#232323" stroke="#b8b8b8" /></TabShape>
              BEMF
            </Tab>
          </Tabs>
          <TabPanel>
            <ChartBox><Chart /></ChartBox>
            <Controls>
              <Combo label="Plot type" value="Time Plot" />
              <GroupLabel>Filter Data</GroupLabel>
              <Group aria-label="Filter Data">
                <Combo label="Filter" value="No Filter" />
                <Spin label="Filter start" value="F_St: 0.050" />
                <Spin label="Taps" value="Taps: 6" />
                <CheckLabel><CheckBox type="checkbox" defaultChecked />Delay Comp</CheckLabel>
                <CheckLabel><CheckBox type="checkbox" defaultChecked />Hamming</CheckLabel>
              </Group>
              <Spin label="Sample rate" value="Fs: 40000" />
            </Controls>
          </TabPanel>
        </Main>
        <Strip>
          <StripButton aria-label="Connect"><PlugIcon /></StripButton>
          <StripButton aria-label="Disconnect"><PlugIcon apart /></StripButton>
          <StripRule />
          <StripButton aria-label="Read motor"><ConfIcon kind="up" letter="M" /></StripButton>
          <StripButton aria-label="Default motor"><ConfIcon kind="turn" letter="M" /></StripButton>
          <StripButton aria-label="Write motor"><ConfIcon kind="down" letter="M" /></StripButton>
          <StripRule />
          <StripButton aria-label="Read app"><ConfIcon kind="up" letter="A" /></StripButton>
          <StripButton aria-label="Default app"><ConfIcon kind="turn" letter="A" /></StripButton>
          <StripButton aria-label="Write app"><ConfIcon kind="down" letter="A" /></StripButton>
          <StripRule />
          <StripButton $on aria-label="Keyboard control"><KeysIcon /></StripButton>
          <StripButton aria-label="Gamepad"><PadIcon /></StripButton>
          <StripButton $on aria-label="Realtime data"><LabelIcon text="RT" tail="bright" /></StripButton>
          <StripButton $on aria-label="Realtime app data"><RtAppIcon /></StripButton>
          <StripButton aria-label="IMU data"><LabelIcon text="IMU" /></StripButton>
          <StripButton aria-label="BMS data"><LabelIcon text="BMS" /></StripButton>
          <StripButton aria-label="Keep alive"><MdFavoriteBorder size={21} /></StripButton>
          <StripButton aria-label="CAN forward"><LabelIcon text="CAN" tail="arrow" /></StripButton>
        </Strip>
      </Body>
      <TaskBar>
        <TaskButton aria-label="Start"><svg width="16" height="18" viewBox="0 0 16 18"><path d="M0 3L7 2V8.500H0ZM8 2L16 1V8.500H8ZM0 9.500H7V16L0 15ZM8 9.500H16V17L8 16Z" fill="#fff" /></svg></TaskButton>
        <SearchBox>
          <svg width="16" height="18" viewBox="0 0 16 18" fill="none" stroke="#222" strokeWidth="1.300" aria-hidden="true"><circle cx="9.500" cy="6" r="5" /><path d="M6.500 10.500L1 17" /></svg>
          <SearchInput aria-label="Search" placeholder="Type here to search" />
          <SearchArt>
            <svg width="30" height="28" viewBox="0 0 30 28" aria-hidden="true"><path d="M11 5V2H19V5" fill="none" stroke="#333" strokeWidth="2" /><path d="M1 5H29V15H1Z" fill="#e89410" /><path d="M1 15H29V27H1Z" fill="#a96108" /><path d="M12 13H18V18H12Z" fill="#ffd21f" /></svg>
          </SearchArt>
        </SearchBox>
        {taskIcons.map((t) => <TaskButton key={t.name} aria-label={t.name} $open={t.open} $active={t.active}>{t.icon}</TaskButton>)}
        <Tray>
          <TrayButton $width={94}>
            <svg width="24" height="26" viewBox="0 0 24 26" aria-hidden="true"><circle cx="12" cy="15" r="10" fill="#f0a030" /><path d="M0 9H14M3 13H18M1 17H16" stroke="#f5dcae" strokeWidth="2" /><circle cx="18" cy="7" r="6" fill="#d4302a" /><text x="18" y="10" fontSize="8" textAnchor="middle" fill="#fff">1</text></svg>
            30°C
          </TrayButton>
          <TrayButton $width={22} aria-label="Show hidden icons">{trayIcon("M3 11L8.500 5L14 11")}</TrayButton>
          <TrayButton $width={22} aria-label="Meet now">{trayIcon("M4 5H10V12H4ZM10 7L13 6V11L10 10M4 3Q8 0 12 3M4 14Q8 17 12 14")}</TrayButton>
          <TrayButton $width={22} aria-label="Network">{trayIcon("M5 3H16V11H5ZM8 14H13M10.500 11V14M1 2H4V6H1ZM2.500 6V14H6")}</TrayButton>
          <TrayButton $width={22} aria-label="Battery">{trayIcon("M4 5H14V12H4ZM14 7H16V10H14M6 7H12M6 8.500H12M6 10H12M1 3V6H4V3M2.500 6V10")}</TrayButton>
          <TrayButton $width={22} aria-label="Volume">{trayIcon("M1 6H3L7 3V13L3 10H1ZM9 6Q10 8 9 10M11 4Q14 8 11 12M13 2Q18 8 13 14")}</TrayButton>
          <TrayButton $width={34}>ENG</TrayButton>
          <Clock>19:38<br />18-09-2024</Clock>
          <TrayButton $width={32} aria-label="Notifications">
            <svg width="18" height="18" viewBox="0 0 18 18" aria-hidden="true"><path d="M1 1H17V13H12L8 17V13H1Z" fill="#fff" /><path d="M3 4H14M3 7H14M3 10H9" stroke="#1d2948" /><circle cx="14" cy="13" r="3" fill="#1d2948" stroke="#fff" /></svg>
          </TrayButton>
        </Tray>
      </TaskBar>
    </Page>
  );
}
